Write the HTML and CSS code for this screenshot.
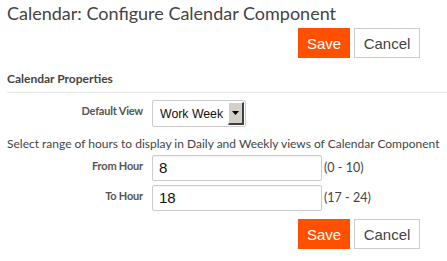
FILE: index.html
```html
<!DOCTYPE html>
<html>
<head>
<meta charset="utf-8">
<link rel="stylesheet" href="styles.css">
</head>
<body>
<div class="page">
  <h1 class="title">Calendar: Configure Calendar Component</h1>
  <div class="actions">
    <button class="btn btn-save">Save</button>
    <button class="btn btn-cancel">Cancel</button>
  </div>
  <div class="section-title">Calendar Properties</div>
  <div class="form-row row-view">
    <label class="lbl">Default View</label>
    <div class="select">
      <span class="select-value">Work Week</span>
      <span class="select-btn"><svg width="7" height="4" viewBox="0 0 7 4"><path d="M0 0h7L3.5 4z" fill="#000"/></svg></span>
    </div>
  </div>
  <div class="note">Select range of hours to display in Daily and Weekly views of Calendar Component</div>
  <div class="form-row row-from">
    <label class="lbl">From Hour</label>
    <div class="input">8</div>
    <span class="range">(0 - 10)</span>
  </div>
  <div class="form-row row-to">
    <label class="lbl">To Hour</label>
    <div class="input">18</div>
    <span class="range">(17 - 24)</span>
  </div>
  <div class="actions actions-bottom">
    <button class="btn btn-save">Save</button>
    <button class="btn btn-cancel">Cancel</button>
  </div>
</div>
</body>
</html>
```

FILE: styles.css
```css
html, body {
  margin: 0;
  padding: 0;
  background: #fff;
}
.page {
  width: 440px;
  padding: 0 0 0 7px;
  font-family: Lato, "Open Sans", sans-serif;
  color: #444;
}
.title {
  margin: 0;
  padding-top: 1px;
  font-size: 18px;
  font-weight: normal;
  line-height: 24px;
  color: #444;
}
.actions {
  display: flex;
  justify-content: flex-end;
  gap: 4px;
  padding-right: 27px;
  margin-top: 3px;
}
.btn {
  font-family: "Liberation Sans", Arial, sans-serif;
  font-size: 15px;
  height: 30px;
  padding: 0;
  margin: 0;
  border: 1px solid #ccc;
  cursor: pointer;
}
.btn-save {
  width: 52px;
  background: #ff5000;
  border-color: #ff5000;
  color: #fff;
}
.btn-cancel {
  width: 66px;
  background: #fff;
  color: #444;
}
.section-title {
  margin-top: 13px;
  font-size: 12px;
  font-weight: bold;
  line-height: 16px;
  color: #444;
  padding-bottom: 5px;
  border-bottom: 1px solid #e6e6e6;
}
.form-row {
  display: grid;
  grid-template-columns: 136px auto auto;
  column-gap: 9px;
  align-items: center;
  justify-content: start;
}
.row-view {
  margin-top: 7px;
}
.lbl {
  text-align: right;
  font-size: 11px;
  font-weight: bold;
  color: #555;
  letter-spacing: -0.2px;
  position: relative;
  top: -3px;
}
.select {
  width: 94px;
  height: 27px;
  box-sizing: border-box;
  border: 1px solid #ccc;
  border-radius: 2px;
  display: flex;
  align-items: center;
  justify-content: space-between;
  padding: 1px 1px 1px 7px;
  background: #fff;
}
.select-value {
  font-family: "Liberation Sans", Arial, sans-serif;
  font-size: 12.3px;
  color: #111;
}
.select-btn {
  width: 16px;
  height: 23px;
  box-sizing: border-box;
  background: #d4d0c8;
  border-top: 1px solid #fff;
  border-left: 1px solid #fff;
  border-right: 2px solid #404040;
  border-bottom: 2px solid #404040;
  display: flex;
  align-items: center;
  justify-content: center;
}
.note {
  margin-top: 9px;
  font-size: 12px;
  line-height: 16px;
  color: #444;
  white-space: nowrap;
}
.row-from {
  margin-top: 3px;
  grid-template-columns: 136px 170px auto;
  column-gap: 9px;
}
.row-to {
  margin-top: 4px;
  grid-template-columns: 136px 170px auto;
}
.input {
  height: 26px;
  box-sizing: border-box;
  border: 1px solid #ccc;
  border-radius: 2px;
  padding: 2px 6px;
  font-family: "Liberation Sans", Arial, sans-serif;
  font-size: 15px;
  line-height: 20px;
  color: #111;
  box-shadow: inset 0 1px 1px rgba(0,0,0,0.05);
}
.range {
  font-size: 12.5px;
  color: #444;
  margin-left: -7px;
  position: relative;
  top: -1px;
}
.actions-bottom {
  margin-top: 8px;
}
```
